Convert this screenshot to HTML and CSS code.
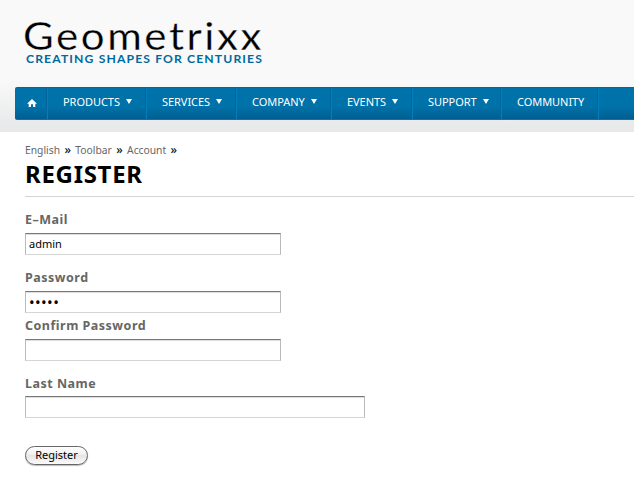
FILE: index.html
```html
<!DOCTYPE html>
<html lang="en">
<head>
<meta charset="utf-8">
<title>Register - Geometrixx</title>
<link rel="stylesheet" href="styles.css">
</head>
<body>
<header class="header">
  <svg class="logo" width="250" height="54" viewBox="0 0 250 54">
    <text class="logo-name" x="-2" y="36.5" textLength="241" lengthAdjust="spacingAndGlyphs">Geometrixx</text>
    <text class="logo-tag" x="1" y="50" textLength="237" lengthAdjust="spacingAndGlyphs">CREATING SHAPES FOR CENTURIES</text>
  </svg>
  <nav class="nav">
    <a class="item home"><svg width="10" height="8" viewBox="0 0 10 8"><path d="M5 0 10 4.7H8.3V8H6V5.2H4V8H1.7V4.7H0Z" fill="#fff"/></svg></a>
    <a class="item products"><span>PRODUCTS</span><i class="arrow"></i></a>
    <a class="item services"><span>SERVICES</span><i class="arrow"></i></a>
    <a class="item company"><span>COMPANY</span><i class="arrow"></i></a>
    <a class="item events"><span>EVENTS</span><i class="arrow"></i></a>
    <a class="item support"><span>SUPPORT</span><i class="arrow"></i></a>
    <a class="item community"><span>COMMUNITY</span></a>
  </nav>
</header>
<main class="content">
  <div class="crumbs"><a>English</a><b>»</b><a>Toolbar</a><b>»</b><a>Account</a><b>»</b></div>
  <h1 class="title">REGISTER</h1>
  <form class="form">
    <label class="label email" for="email">E–Mail</label>
    <input class="field" id="email" type="text" value="admin">
    <label class="label password" for="password">Password</label>
    <input class="field secret" id="password" type="text" value="•••••">
    <label class="label confirm" for="confirm">Confirm Password</label>
    <input class="field" id="confirm" type="password">
    <label class="label last" for="last">Last Name</label>
    <input class="field wide" id="last" type="text">
    <button class="submit" type="button">Register</button>
  </form>
</main>
</body>
</html>
```
FILE: styles.css
```css
* { box-sizing: border-box; }
body {
  margin: 0;
  height: 484px;
  overflow: hidden;
  background: #fff;
  font-family: "Noto Sans", "Open Sans", sans-serif;
  font-size: 11px;
}
.header {
  height: 132px;
  padding-top: 13px;
  background: linear-gradient(#f9f9f9 80px, #e8e9ea 126px);
}
.logo { display: block; margin: 0 0 20px 25px; overflow: visible; }
.logo-name { font: 400 39.5px Lato, sans-serif; letter-spacing: 2.4px; fill: #000; stroke: #f9f9f9; stroke-width: .3px; }
.logo-tag { font: 700 10.8px Lato, sans-serif; letter-spacing: 1px; fill: #00699f; }
.nav {
  display: flex;
  height: 33px;
  margin-left: 15px;
  border-top: 1px solid #00689c;
  border-bottom: 1px solid #0076b3;
  border-radius: 2px 0 0 2px;
  background: linear-gradient(#0072aa 18px, #005f91);
}
.item {
  display: flex;
  align-items: center;
  flex: none;
  height: 31px;
  padding: 0 0 4px 15px;
  border-right: 1px solid #0080bf;
  box-shadow: inset -1px 0 #00659a;
  color: #fff;
  font-size: 11px;
  letter-spacing: -.05px;
}
.home { width: 33px; padding: 0 0 1px 12px; }
.products { width: 99px; }
.services { width: 90px; }
.company { width: 95px; }
.events { width: 81px; }
.support { width: 89px; }
.community { width: 97px; }
.arrow {
  margin-left: 6px;
  border: solid transparent;
  border-width: 5px 3.5px 0;
  border-top-color: #fff;
}
.content { padding: 10px 0 0 25px; }
.crumbs {
  display: flex;
  height: 17px;
  line-height: 17px;
  font-size: 10.3px;
  color: #666;
}
.crumbs b { margin: 0 4.4px; font-weight: 500; font-size: 12px; line-height: 16px; color: #111; }
.title {
  height: 38px;
  margin: 0;
  border-bottom: 1px solid #d5d5d5;
  font-size: 24px;
  line-height: 30px;
  font-weight: 700;
  letter-spacing: .7px;
}
.form { display: flex; flex-direction: column; align-items: flex-start; }
.label {
  height: 18px;
  line-height: 18px;
  font-size: 12.5px;
  font-weight: 700;
  letter-spacing: .5px;
  color: #666;
}
.email { margin: 14px 0 4px; }
.password { margin: 14px 0 4px; }
.confirm { margin: 4px 0; }
.last { margin: 14px 0 3px; }
.field {
  width: 256px;
  height: 22px;
  padding: 0 3px 2px;
  border: 1px solid #bababa;
  border-top-color: #777;
  border-bottom-color: #d5d5d5;
  border-radius: 0;
  background: #fff;
  box-shadow: inset 0 1px #dedede;
  color: #000;
  font: 11px "Noto Sans", sans-serif;
  outline: 0;
}
.secret { padding-bottom: 0; font-size: 15px; letter-spacing: .4px; }
.wide { width: 340px; }
.submit {
  width: 63px;
  height: 19px;
  margin-top: 28px;
  padding: 0 0 2px;
  border: 1px solid #666;
  border-radius: 10px;
  background: linear-gradient(#fff, #f0f0f0 45%, #e5e5e5 50%, #fafafa);
  box-shadow: 0 1px 1px #bbb;
  color: #000;
  font: 11px/15px "Noto Sans", sans-serif;
}
```
